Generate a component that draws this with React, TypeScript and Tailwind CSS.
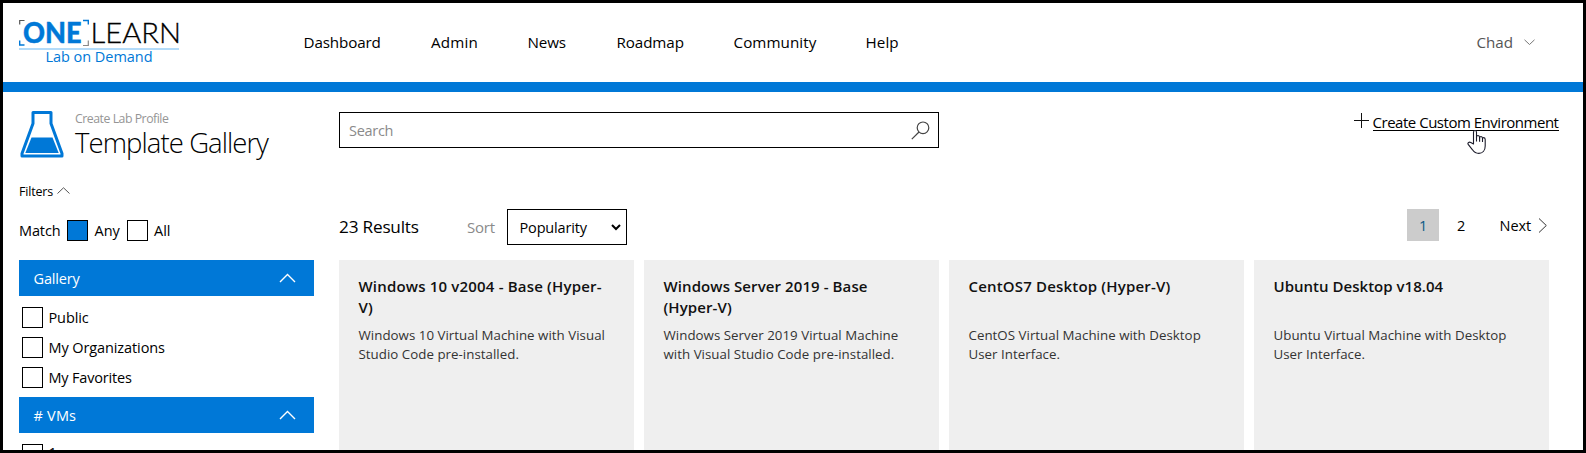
import type { ReactNode } from "react";

const nav = [
  { label: "Dashboard", box: "w-[127.5px] tracking-[-0.13px]" },
  { label: "Admin", box: "w-[96.5px] tracking-[0.2px]" },
  { label: "News", box: "w-[89px] tracking-[-0.15px]" },
  { label: "Roadmap", box: "w-[117px] tracking-[-0.1px]" },
  { label: "Community", box: "w-[132px] tracking-[0.07px]" },
  { label: "Help", box: "w-[60px] tracking-[0.1px]" },
];

const cards = [
  {
    title: ["Windows 10 v2004 - Base (Hyper-", "V)"],
    text: ["Windows 10 Virtual Machine with Visual", "Studio Code pre-installed."],
    tracking: "tracking-[0.18px]",
  },
  {
    title: ["Windows Server 2019 - Base", "(Hyper-V)"],
    text: ["Windows Server 2019 Virtual Machine", "with Visual Studio Code pre-installed."],
    tracking: "tracking-[0.09px]",
  },
  {
    title: ["CentOS7 Desktop (Hyper-V)"],
    text: ["CentOS Virtual Machine with Desktop", "User Interface."],
    tracking: "tracking-[0.18px]",
  },
  {
    title: ["Ubuntu Desktop v18.04"],
    text: ["Ubuntu Virtual Machine with Desktop", "User Interface."],
    tracking: "tracking-[0.02px]",
  },
];

function Logo() {
  return (
    <svg width="164" height="50" viewBox="0 0 164 50" className="block overflow-visible" fill="none">
      <path d="M.7 5.5V1.5H5.5" stroke="#555" strokeWidth="1.2" />
      <path d="M64 1.5H69.3V5.5" stroke="#0078d7" strokeWidth="1.4" />
      <path d="M.7 21.5V26H5.5" stroke="#0078d7" strokeWidth="1.4" />
      <path d="M64 26.5H69.3V21.5" stroke="#888" strokeWidth="1.2" />
      <text x="4" y="23.8" textLength="58.5" lengthAdjust="spacingAndGlyphs" fill="#0078d7" stroke="#0078d7" strokeWidth="0.4" className="font-['Lato',sans-serif] text-[27.5px] font-black">ONE</text>
      <text x="71.5" y="23.8" textLength="90.5" lengthAdjust="spacingAndGlyphs" fill="#000" stroke="#000" strokeWidth="0.3" className="font-['Lato',sans-serif] text-[27.5px] font-light">LEARN</text>
      <path d="M0 30H160" stroke="#b3dbf9" strokeWidth="2" />
      <text x="26.5" y="43" textLength="107" fill="#0078d7" className="text-[14.5px]">Lab on Demand</text>
    </svg>
  );
}

function Flask() {
  return (
    <svg width="44" height="47" viewBox="0 0 44 47" className="block">
      <path d="M13 1.5H31V12.5L42 42.5V45H2V42.5L13 12.5Z" fill="#fff" stroke="#0078d7" strokeWidth="3" strokeLinejoin="round" />
      <path d="M11.5 26.5H32.5L38.7 42H5.3Z" fill="#0078d7" />
    </svg>
  );
}

function Chevron({ d, w, h, color, stroke = 1 }: { d: string; w: number; h: number; color: string; stroke?: number }) {
  return (
    <svg width={w} height={h} viewBox={`0 0 ${w} ${h}`} className="block shrink-0" fill="none" stroke={color} strokeWidth={stroke}>
      <path d={d} />
    </svg>
  );
}

function Check({ checked = false }: { checked?: boolean }) {
  return <span className={checked ? "block size-[21px] shrink-0 border border-black bg-[#0078d7]" : "block size-[21px] shrink-0 border border-black bg-white"} />;
}

function FilterHeader({ children }: { children: ReactNode }) {
  return (
    <div className="flex h-9 items-center justify-between bg-[#0078d7] pl-[14.5px] pr-[18px] text-[14.5px] text-white">
      <span className="pt-px">{children}</span>
      <Chevron d="M1 9L8.5 1.5L16 9" w={17} h={10} color="#fff" stroke={1.4} />
    </div>
  );
}

function Option({ label, spacing }: { label: string; spacing: string }) {
  return (
    <label className="flex h-[30px] items-center pl-[3px] text-[14.5px]">
      <Check />
      <span className={`ml-[5.5px] ${spacing}`}>{label}</span>
    </label>
  );
}

function Sidebar() {
  return (
    <aside className="w-[295px] shrink-0">
      <div className="flex h-[66px]">
        <div className="pl-px pt-[19px]"><Flask /></div>
        <div className="pl-[11px] pt-[18px]">
          <div className="text-[12.3px] leading-[18px] tracking-[-0.48px] text-[#959595]">Create Lab Profile</div>
          <h1 className="whitespace-nowrap text-[27.5px] font-light leading-[29px] tracking-[-0.92px]">Template Gallery</h1>
        </div>
      </div>
      <div className="mt-[25px] flex h-[18px] items-center gap-[4px] text-[12.5px] tracking-[-0.18px]">
        Filters
        <Chevron d="M0.5 6.5L6.5 0.8L12.5 6.5" w={13} h={10} color="#555" />
      </div>
      <div className="mt-[19px] flex h-[21px] items-center text-[14.5px]">
        <span className="w-[48px] tracking-[-0.13px]">Match</span>
        <Check checked />
        <span className="w-[39px] pl-[6.5px]">Any</span>
        <Check />
        <span className="pl-[6px]">All</span>
      </div>
      <div className="mt-[19px]">
        <FilterHeader><span className="tracking-[-0.15px]">Gallery</span></FilterHeader>
        <div className="h-[101px] pt-[6px]">
          <Option label="Public" spacing="pt-[2px] tracking-[-0.1px]" />
          <Option label="My Organizations" spacing="pt-[2px] tracking-[-0.1px]" />
          <Option label="My Favorites" spacing="pt-[2px] tracking-[-0.18px]" />
        </div>
        <FilterHeader><span className="tracking-[0.2px]"># VMs</span></FilterHeader>
        <div className="pt-[6px]"><Option label="1" spacing="pb-[3px]" /></div>
      </div>
    </aside>
  );
}

function HandCursor() {
  return (
    <svg width="20" height="26" viewBox="0 0 20 26" className="pointer-events-none absolute left-[94px] top-[17px]">
      <path d="M6.5 15V3.2C6.5 .9 9.5 .9 9.5 3.2V8.5C9.5 5.8 12.6 5.9 12.6 8.7V9.3C12.6 6.7 15.5 6.9 15.5 9.5V10.2C15.5 7.9 18.2 8.1 18.2 10.5V17C18.2 21.8 15.4 24.4 11.8 24.4C8.8 24.4 7 23 5.5 20.8L1.2 15.4C.2 13.7 2.4 12.5 3.8 13.6Z" fill="#fff" stroke="#1b1b2a" strokeWidth="1.1" strokeLinejoin="round" />
      <path d="M9.5 8V12.5M12.6 9V12.8M15.5 9.8V13" stroke="#1b1b2a" strokeWidth="1.1" />
    </svg>
  );
}

export default function App() {
  return (
    <div className="flex h-[453px] w-[1586px] flex-col overflow-hidden border-[3px] border-black bg-white font-['Open_Sans','Noto_Sans',sans-serif] text-black">
      <header className="flex h-[89px] shrink-0 border-b-10 border-[#0078d7] pl-[16px]">
        <div className="w-[284.5px] pt-[16px]"><Logo /></div>
        <nav className="flex h-[79px] items-center text-[15.2px]">
          {nav.map((n) => <a key={n.label} className={n.box}>{n.label}</a>)}
        </nav>
        <div className="ml-auto flex h-[79px] items-center gap-[11px] pr-[48px] text-[15.2px] text-[#555]">
          <span>Chad</span>
          <Chevron d="M0.5 0.8L5.5 5.5L10.5 0.8" w={11} h={7} color="#777" />
        </div>
      </header>
      <div className="flex min-h-0 flex-1 overflow-hidden pl-[16px]">
        <Sidebar />
        <main className="ml-[25px] flex flex-1 flex-col">
          <div className="flex pt-[20px]">
            <div className="flex h-[36px] w-[600px] items-center justify-between border border-black pl-[9px] pr-[8px] text-[14.5px] text-[#8a8a8a]">
              <span className="pt-px tracking-[-0.3px]">Search</span>
              <svg width="19" height="19" viewBox="0 0 19 19" fill="none" stroke="#444" strokeWidth="1.2">
                <circle cx="12" cy="6.8" r="5.8" /><path d="M8 11L.8 18.2" />
              </svg>
            </div>
            <div className="relative ml-auto mr-[24.5px] flex h-[24px] items-start text-[15px]">
              <svg width="15" height="15" viewBox="0 0 15 15" className="mr-[4px] mt-px" stroke="#111"><path d="M7.5 0V15M0 7.5H15" /></svg>
              <a className="mt-[2px] h-[17px] whitespace-nowrap border-b border-black leading-[17px] tracking-[-0.48px]">Create Custom Environment</a>
              <div className="absolute left-[19px] top-0"><HandCursor /></div>
            </div>
          </div>
          <div className="mt-[61px] flex h-[36px]">
            <span className="w-[128px] text-[17.2px] leading-[36px] tracking-[-0.2px]">23 Results</span>
            <span className="w-[40px] text-[15px] leading-[36px] tracking-[-0.2px] text-[#8a8a8a]">Sort</span>
            <button className="flex h-[36px] w-[120px] items-center justify-between border border-black pl-[11.5px] pr-[5px] pt-px text-[14.5px] tracking-[-0.16px]">
              Popularity
              <Chevron d="M1 1L5 5L9 1" w={10} h={8} color="#000" stroke={2} />
            </button>
            <div className="ml-auto mr-[36px] flex h-8 items-center text-[14.5px]">
              <span className="flex size-8 items-center justify-center bg-[#ccc] pt-px text-[#0a5a85]">1</span>
              <span className="w-[60.5px] pl-[18px] pt-px">2</span>
              <span className="pt-px tracking-[-0.1px]">Next</span>
              <span className="pl-[7px]"><Chevron d="M1 0.5L8.3 7.5L1 14.5" w={9} h={15} color="#333" /></span>
            </div>
          </div>
          <div className="mt-[15px] flex min-h-0 flex-1 gap-[10px]">
            {cards.map((c) => (
              <article key={c.title[0]} className="w-[295px] shrink-0 bg-[#efefef] px-[19.5px] pt-[16px]">
                <h2 className={`h-[50px] whitespace-nowrap text-[15px] font-semibold leading-[21px] text-[#111] ${c.tracking}`}>
                  {c.title.map((t) => <span key={t} className="block">{t}</span>)}
                </h2>
                <p className="whitespace-nowrap text-[13.3px] leading-[19px] tracking-[0.03px] text-[#333]">
                  {c.text.map((t) => <span key={t} className="block">{t}</span>)}
                </p>
              </article>
            ))}
          </div>
        </main>
      </div>
    </div>
  );
}
